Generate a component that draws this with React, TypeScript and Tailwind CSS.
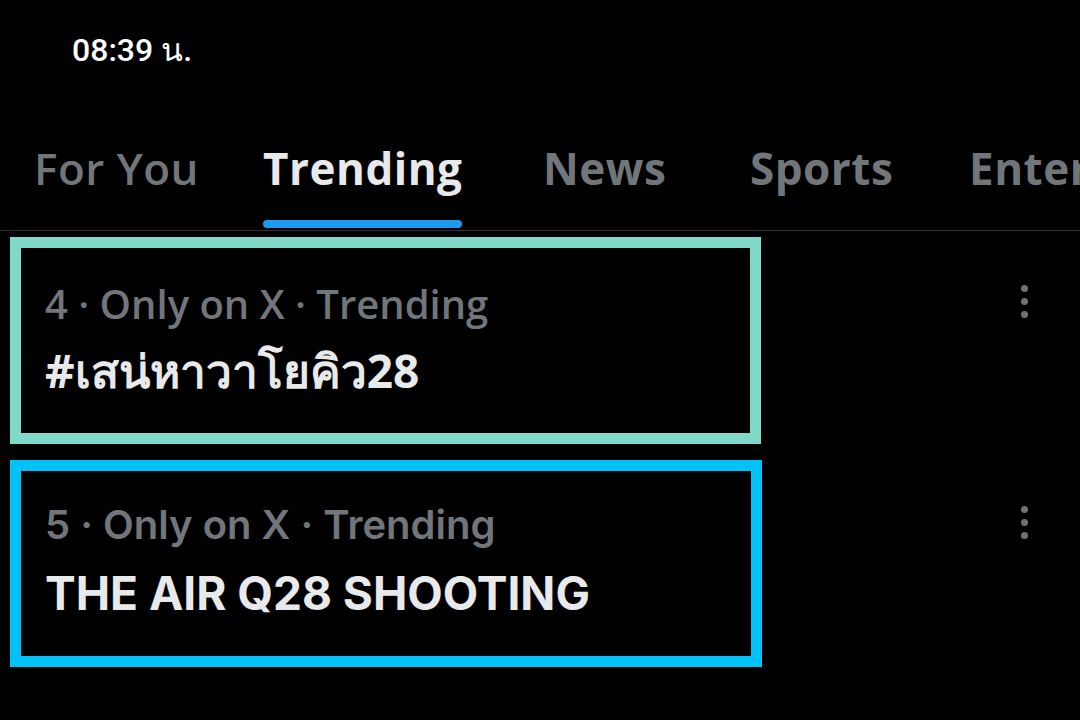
const tabs = [
  { label: "For You", w: "w-[229px]", weight: "font-semibold", active: false },
  { label: "Trending", w: "w-[280px]", weight: "font-bold", active: true },
  { label: "News", w: "w-[207px]", weight: "font-bold", active: false },
  { label: "Sports", w: "w-[219px]", weight: "font-bold", active: false },
  { label: "Entertainment", w: "w-[300px]", weight: "font-bold", active: false },
];

function Kebab({ top }: { top: string }) {
  return (
    <div className={`flex flex-col gap-[6px] mr-[52px] ${top}`}>
      <span className="w-[7px] h-[7px] rounded-full bg-[#6e7378]" />
      <span className="w-[7px] h-[7px] rounded-full bg-[#6e7378]" />
      <span className="w-[7px] h-[7px] rounded-full bg-[#6e7378]" />
    </div>
  );
}

export default function App() {
  return (
    <div className="w-[1080px] h-[720px] bg-black overflow-hidden flex flex-col">
      {/* status bar */}
      <div className="pt-[30px] pl-[72px] h-[120px] text-white text-[32px] leading-[40px] font-medium font-['Roboto','Noto_Sans',sans-serif]">
        08:39 น.
      </div>

      {/* tabs */}
      <div className="flex pl-[34px] h-[111px] border-b border-[#2f3336] whitespace-nowrap font-['Open_Sans',sans-serif]">
        {tabs.map((t) => (
          <div key={t.label} className={`${t.w} shrink-0 flex`}>
            <div className="flex flex-col">
              <span
                className={`pt-[22px] text-[44px] leading-[52px] tracking-[0.5px] ${t.weight} ${
                  t.active ? "text-[#e7e9ea]" : "text-[#71767b]"
                }`}
              >
                {t.label}
              </span>
              {t.active && <span className="mt-[26px] h-[8px] w-full rounded-full bg-[#1d9bf0]" />}
            </div>
          </div>
        ))}
      </div>

      {/* trend 4 */}
      <div className="flex items-start justify-between mt-[6px]">
        <div className="ml-[10px] w-[751px] h-[207px] border-[11px] border-[#80d8c8] pl-[24px] pt-[32px] font-['Open_Sans','Noto_Sans',sans-serif]">
          <div className="text-[40px] leading-[48px] font-semibold text-[#71767b]">4 · Only on X · Trending</div>
          <div className="mt-[16px] text-[46px] leading-[52px] font-bold text-[#e7e9ea]">#เสน่หาวาโยคิว28</div>
        </div>
        <Kebab top="mt-[48px]" />
      </div>

      {/* trend 5 */}
      <div className="flex items-start justify-between mt-[16px]">
        <div className="ml-[10px] w-[752px] h-[207px] border-[11px] border-[#00c2f6] pl-[24px] pt-[32px] font-['Inter',sans-serif]">
          <div className="text-[40px] leading-[44px] font-semibold text-[#71767b]">5 · Only on X · Trending</div>
          <div className="mt-[20px] text-[46px] leading-[52px] font-bold text-[#e7e9ea]">THE AIR Q28 SHOOTING</div>
        </div>
        <Kebab top="mt-[46px]" />
      </div>
    </div>
  );
}
